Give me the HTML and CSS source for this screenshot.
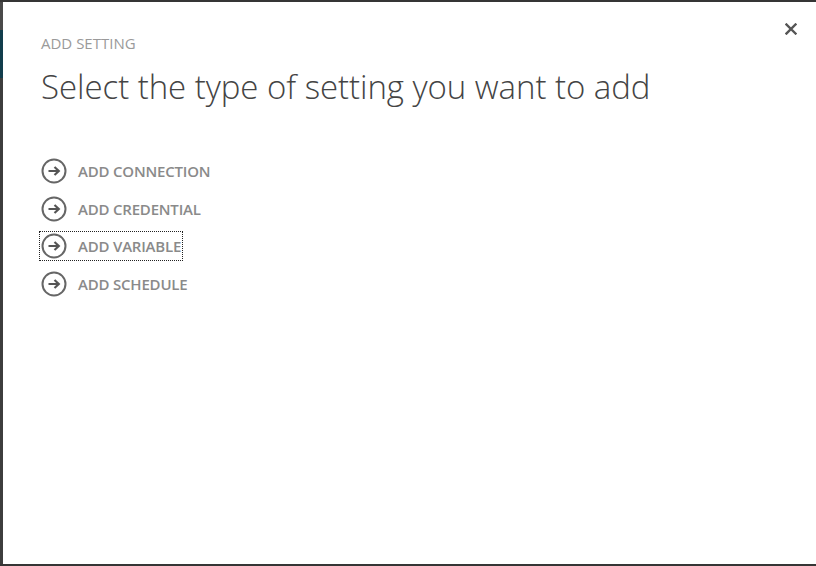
FILE: index.html
```html
<!DOCTYPE html>
<html>
<head>
<meta charset="utf-8">
<link rel="stylesheet" href="styles.css">
</head>
<body>
<div class="backdrop">
  <div class="peek"></div>
  <div class="dialog">
    <button class="close" aria-label="Close">
      <svg width="12" height="12" viewBox="0 0 12 12"><path d="M1.5 1.5 L10.5 10.5 M10.5 1.5 L1.5 10.5" stroke="#555" stroke-width="2.4" stroke-linecap="square"/></svg>
    </button>
    <div class="eyebrow">ADD SETTING</div>
    <h1 class="heading">Select the type of setting you want to add</h1>
    <ul class="options">
      <li class="option"><span class="arrow"><svg width="26" height="26" viewBox="0 0 26 26"><circle cx="13" cy="13" r="11.5" fill="none" stroke="#666" stroke-width="2"/><path d="M7.5 13 H17.5 M13.5 9 L17.8 13 L13.5 17" fill="none" stroke="#555" stroke-width="2.2"/></svg></span><span class="label">ADD CONNECTION</span></li>
      <li class="option"><span class="arrow"><svg width="26" height="26" viewBox="0 0 26 26"><circle cx="13" cy="13" r="11.5" fill="none" stroke="#666" stroke-width="2"/><path d="M7.5 13 H17.5 M13.5 9 L17.8 13 L13.5 17" fill="none" stroke="#555" stroke-width="2.2"/></svg></span><span class="label">ADD CREDENTIAL</span></li>
      <li class="option focused"><span class="arrow"><svg width="26" height="26" viewBox="0 0 26 26"><circle cx="13" cy="13" r="11.5" fill="none" stroke="#666" stroke-width="2"/><path d="M7.5 13 H17.5 M13.5 9 L17.8 13 L13.5 17" fill="none" stroke="#555" stroke-width="2.2"/></svg></span><span class="label">ADD VARIABLE</span></li>
      <li class="option"><span class="arrow"><svg width="26" height="26" viewBox="0 0 26 26"><circle cx="13" cy="13" r="11.5" fill="none" stroke="#666" stroke-width="2"/><path d="M7.5 13 H17.5 M13.5 9 L17.8 13 L13.5 17" fill="none" stroke="#555" stroke-width="2.2"/></svg></span><span class="label">ADD SCHEDULE</span></li>
    </ul>
  </div>
</div>
</body>
</html>
```
FILE: styles.css
```css
html, body {
  margin: 0;
  padding: 0;
  width: 816px;
  height: 566px;
  overflow: hidden;
  background: #353535;
  font-family: "Open Sans", "Noto Sans", sans-serif;
}
.backdrop {
  display: flex;
  width: 816px;
  height: 566px;
  padding: 2px 0 2px 0;
  box-sizing: border-box;
}
.peek {
  width: 3px;
  flex: none;
  background: linear-gradient(to bottom, #4a4a4a 0, #4a4a4a 28px, #123d4c 28px, #123d4c 76px, #3d3d3d 76px);
}
.dialog {
  position: relative;
  flex: 1;
  background: #fff;
  padding: 31px 38px 0 38px;
  box-sizing: border-box;
}
.close {
  position: absolute;
  top: 20px;
  right: 18px;
  width: 14px;
  height: 14px;
  padding: 0;
  border: 0;
  background: none;
  display: flex;
  align-items: center;
  justify-content: center;
}
.eyebrow {
  font-size: 15px;
  color: #9a9a9a;
  line-height: 20px;
}
.heading {
  margin: 12px 0 0 0;
  font-size: 33px;
  font-weight: 300;
  color: #444;
  line-height: 44px;
  letter-spacing: -0.05px;
}
.options {
  list-style: none;
  margin: 49px 0 0 0;
  padding: 0;
  display: flex;
  flex-direction: column;
  gap: 11.5px;
}
.option {
  display: flex;
  align-items: center;
  gap: 11px;
  height: 26px;
  width: max-content;
  color: #8a8a8a;
}
.arrow {
  display: flex;
  width: 26px;
  height: 26px;
}
.label {
  font-size: 15px;
  font-weight: 600;
  letter-spacing: -0.2px;
}
.focused {
  outline: 1px dotted #222;
  outline-offset: 1px;
}
```
